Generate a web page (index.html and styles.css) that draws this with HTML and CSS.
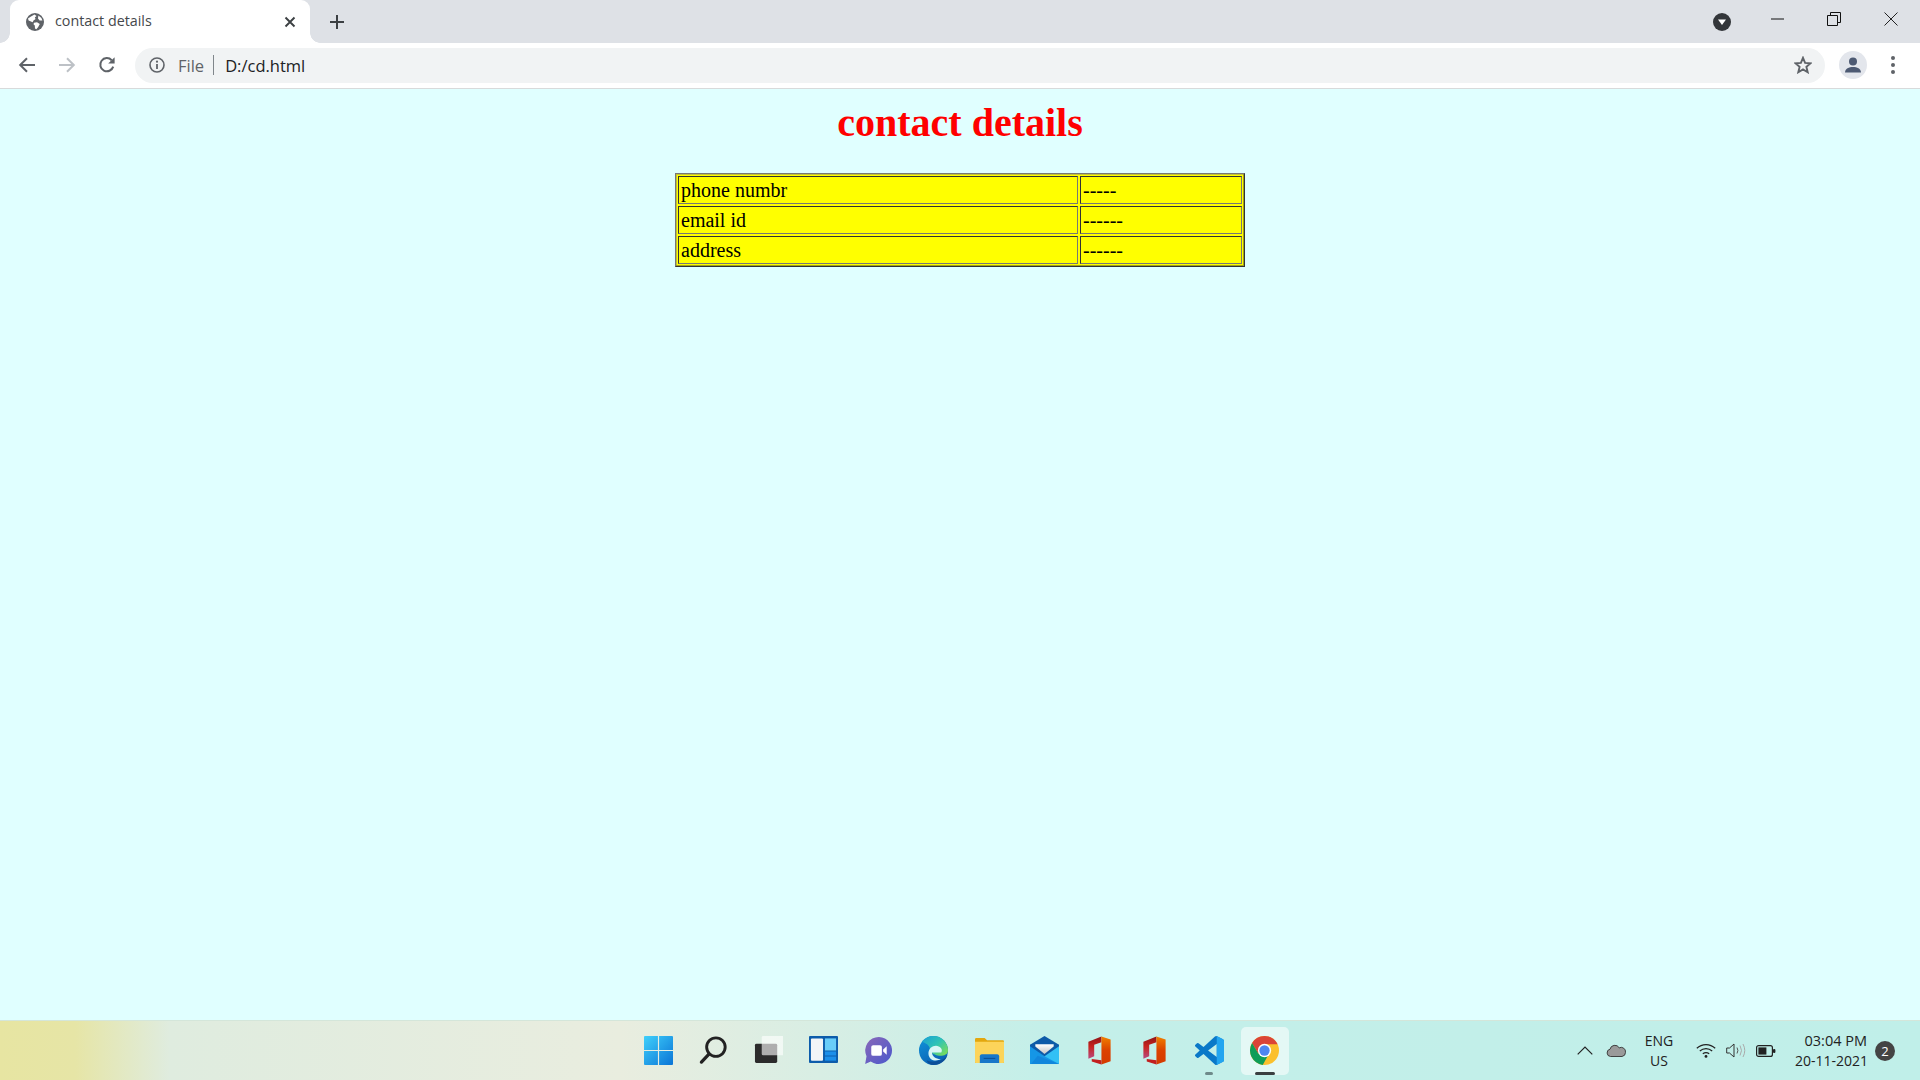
FILE: index.html
```html
<!DOCTYPE html>
<html lang="en">
<head>
<meta charset="utf-8">
<title>contact details</title>
<link rel="stylesheet" href="styles.css">
</head>
<body>
<div class="tabstrip">
  <div class="tab">
    <svg class="globe" viewBox="0 0 18 18"><circle cx="9" cy="9" r="9" fill="#5f6368"/><path d="M2 5.5 5 3.6 8.5 1.6 10.5 3 8.8 4.6 9.6 6 7.5 7.4 6.6 9.2 4.4 8.2 2.6 7.5Z M8 9.7 11 9.3 13.8 11 12.2 14 10.4 16.2 9 15.4 8.8 12.6 7.5 11.2Z M12.4 2.6 15.4 5 16.4 7.6 13.6 7.6 12 5.4Z" fill="#fff"/></svg>
    <span class="tab-title">contact details</span>
    <svg class="tab-close" viewBox="0 0 12 12"><path d="M1.5 1.5 10.5 10.5M10.5 1.5 1.5 10.5" stroke="#3c4043" stroke-width="1.9" fill="none"/></svg>
  </div>
  <svg class="newtab" viewBox="0 0 14 14"><path d="M7 0V14M0 7H14" stroke="#3c4043" stroke-width="2" fill="none"/></svg>
  <div class="strip-space"></div>
  <svg class="tabsearch" viewBox="0 0 18 18"><circle cx="9" cy="9" r="9" fill="#33363a"/><path d="M5 6.6H13L9 12Z" fill="#fff"/></svg>
  <svg class="winbtn" viewBox="0 0 14 14"><path d="M0 7H13" stroke="#111" stroke-width="1" fill="none"/></svg>
  <svg class="winbtn" viewBox="0 0 14 14"><path d="M.5 3.5H10.5V13.5H.5ZM3.5 3V.5H13.5V10.5H11" stroke="#111" stroke-width="1" fill="none"/></svg>
  <svg class="winbtn" viewBox="0 0 14 14"><path d="M.5.5 13.5 13.5M13.5.5.5 13.5" stroke="#222" stroke-width="1" fill="none"/></svg>
</div>

<div class="toolbar">
  <svg class="navicon" viewBox="0 0 18 18"><path d="M17 9H2.5M9 2.2 2.2 9 9 15.8" stroke="#5f6368" stroke-width="2" fill="none"/></svg>
  <svg class="navicon" viewBox="0 0 18 18"><path d="M1 9H15.5M9 2.2 15.8 9 9 15.8" stroke="#bdc1c6" stroke-width="2" fill="none"/></svg>
  <svg class="navicon" viewBox="0 0 18 18"><path d="M15.2 10.6A6.6 6.6 0 1 1 13.7 4.2" stroke="#5f6368" stroke-width="2" fill="none"/><path d="M16.6 1.2V7.6H10.2Z" fill="#5f6368"/></svg>
  <div class="omnibox">
    <svg class="info" viewBox="0 0 16 16"><circle cx="8" cy="8" r="7" stroke="#5f6368" stroke-width="1.6" fill="none"/><path d="M8 7V12" stroke="#5f6368" stroke-width="1.8"/><circle cx="8" cy="4.7" r="1.1" fill="#5f6368"/></svg>
    <span class="scheme">File</span>
    <span class="sep"></span>
    <span class="url">D:/cd.html</span>
    <svg class="star" viewBox="0 0 18 18"><path d="M9 1.8 11.1 6.9 16.6 7.3 12.4 10.9 13.7 16.2 9 13.4 4.3 16.2 5.6 10.9 1.4 7.3 6.9 6.9Z" stroke="#5f6368" stroke-width="1.9" fill="none"/></svg>
  </div>
  <div class="avatar">
    <svg viewBox="0 0 18 18"><circle cx="9" cy="5.4" r="4" fill="#4d5a73"/><path d="M1 16.5C1 12.6 5 11 9 11S17 12.6 17 16.5Z" fill="#4d5a73"/></svg>
  </div>
  <div class="dots"><i></i><i></i><i></i></div>
</div>

<main class="page">
  <h1 class="heading">contact details</h1>
  <table class="contact">
    <tr><td class="label">phone numbr</td><td>-----</td></tr>
    <tr><td class="label">email id</td><td>------</td></tr>
    <tr><td class="label">address</td><td>------</td></tr>
  </table>
</main>

<footer class="taskbar">
  <div class="tb-left"></div>
  <div class="apps">
    <div class="app"><svg viewBox="0 0 30 30"><defs><linearGradient id="w" x1="0" y1="0" x2="1" y2="1"><stop offset="0" stop-color="#3fd0fb"/><stop offset="1" stop-color="#0a74d6"/></linearGradient></defs><path d="M1 0H14.4V14.4H0V1A1 1 0 0 1 1 0ZM15.6 0H29A1 1 0 0 1 30 1V14.4H15.6ZM0 15.6H14.4V30H1A1 1 0 0 1 0 29ZM15.6 15.6H30V29A1 1 0 0 1 29 30H15.6Z" fill="url(#w)"/></svg></div>
    <div class="app"><svg viewBox="0 0 30 30"><circle cx="17.5" cy="11.5" r="9.6" stroke="#222" stroke-width="3" fill="none"/><path d="M10.5 18.5 2.5 27" stroke="#222" stroke-width="3.4" stroke-linecap="round"/></svg></div>
    <div class="app"><svg viewBox="0 0 30 30"><rect x="1" y="8" width="23" height="20" rx="1.5" fill="#2b2b2b"/><rect x="8" y="0" width="23" height="20" rx="1.5" fill="#fff" fill-opacity=".62"/></svg></div>
    <div class="app"><svg viewBox="0 0 30 30"><rect x="0" y="0" width="30" height="28" rx="1" fill="#0d5cab"/><rect x="2" y="2.5" width="12.5" height="23" rx="1" fill="#f3f5f7"/><rect x="16.5" y="2.5" width="11.5" height="12.5" fill="#69cdf9"/><rect x="16.5" y="16" width="11.5" height="4.2" fill="#1b8fea"/><rect x="16.5" y="21.2" width="11.5" height="4.3" fill="#1b8fea"/></svg></div>
    <div class="app"><svg viewBox="0 0 30 30"><defs><linearGradient id="c" x1="0" y1="0" x2="1" y2="1"><stop offset="0" stop-color="#8a68b8"/><stop offset="1" stop-color="#4a58cc"/></linearGradient></defs><path d="M15.5 1A14 14 0 1 1 7 26.5L1.2 29 2.6 21A14 14 0 0 1 15.5 1Z" fill="url(#c)"/><rect x="7.5" y="9.5" width="11" height="11" rx="2" fill="#fff"/><path d="M19.8 14 23.5 10.5V19.5L19.8 16Z" fill="#fff"/></svg></div>
    <div class="app"><svg viewBox="0 0 30 30"><defs><linearGradient id="e0" x1="0" y1="0" x2=".5" y2="1"><stop offset="0" stop-color="#0f96dc"/><stop offset="1" stop-color="#0b62b4"/></linearGradient><linearGradient id="e1" x1="0" y1="0" x2="1" y2=".8"><stop offset="0" stop-color="#1a9fd6"/><stop offset=".55" stop-color="#2fc4b4"/><stop offset="1" stop-color="#78dc5c"/></linearGradient></defs><circle cx="15" cy="15" r="15" fill="url(#e0)"/><path d="M15 0A15 15 0 0 1 30 15C30 19 26 20.5 22 20.5 19 20.5 14 19 11 15 12 11 9 8 3 6A15 15 0 0 1 15 0Z" fill="url(#e1)"/><path d="M29.6 19C28 26 22 30 15 30 11.5 30 8.8 28 7.8 25 11 27 18 27 24 24.6 27 23.2 28.8 21.2 29.6 19Z" fill="#0c4f99"/><path d="M9.8 18.5C9.5 12 16 8.8 20.4 10.8 23.6 12.2 24.4 15.2 23 17H13.4C13.8 21 17 23.6 22.4 23.8 17.5 27 10.2 25 9.8 18.5Z" fill="#d8f6f5"/></svg></div>
    <div class="app"><svg viewBox="0 0 30 30"><path d="M0 3.5C0 2.5.8 2 1.5 2H10L12.5 4.5H28.5C29.4 4.5 30 5 30 6V27C30 27.7 29.4 28 28.5 28H1.5C.6 28 0 27.7 0 27Z" fill="#e3a70e"/><path d="M0 6H30V27C30 27.7 29.4 28 28.5 28H1.5C.6 28 0 27.7 0 27Z" fill="#fcd45a"/><path d="M5 21C5 20 6 19 7 19H23C24 19 25 20 25 21V28H5Z" fill="#1877c9"/><rect x="9" y="22.6" width="12" height="1.1" fill="#0d4f94"/></svg></div>
    <div class="app"><svg viewBox="0 0 30 30"><defs><linearGradient id="m" x1="0" y1="0" x2="0" y2="1"><stop offset="0" stop-color="#fff"/><stop offset="1" stop-color="#c4c6c8"/></linearGradient></defs><path d="M0 9H30V29H0Z" fill="#33c0f5"/><path d="M0 9 15 21 30 29H0Z" fill="#1596e6"/><path d="M8 20.5 30 29H1Z" fill="#0f7cd6" fill-opacity=".6"/><path d="M0 9 15 0 30 9V10.5L15 21 0 10.5Z" fill="#0d5aa8"/><path d="M5.5 8.5H24.5V10.8L15 18.5 5.5 10.8Z" fill="url(#m)"/></svg></div>
    <div class="app"><svg viewBox="0 0 24 30"><defs><linearGradient id="o1" x1="0" y1="0" x2="0" y2="1"><stop offset="0" stop-color="#8e1418"/><stop offset=".45" stop-color="#c8231e"/><stop offset="1" stop-color="#b84a80"/></linearGradient><linearGradient id="o3" x1="0" y1="0" x2="0" y2="1"><stop offset="0" stop-color="#f08000"/><stop offset=".5" stop-color="#dc4200"/><stop offset="1" stop-color="#d43a00"/></linearGradient></defs><path d="M14 .5 .5 6V23.5L6.5 21V9L14 6.5Z" fill="url(#o1)"/><path d="M14 .5 23.5 3.5V26L14 29.5Z" fill="url(#o3)"/><path d="M4 23.8 14 25.2V29.5L4 26.5Z" fill="#c21f1f"/></svg></div>
    <div class="app"><svg viewBox="0 0 24 30"><path d="M14 .5 .5 6V23.5L6.5 21V9L14 6.5Z" fill="url(#o1)"/><path d="M14 .5 23.5 3.5V26L14 29.5Z" fill="url(#o3)"/><path d="M4 23.8 14 25.2V29.5L4 26.5Z" fill="#c21f1f"/></svg></div>
    <div class="app app-running"><svg viewBox="0 0 24 24"><path fill="#0a78c8" d="M23.15 2.587L18.21.21a1.494 1.494 0 0 0-1.705.29l-9.46 8.63-4.12-3.128a.999.999 0 0 0-1.276.057L.327 7.261A1 1 0 0 0 .326 8.74L3.899 12 .326 15.26a1 1 0 0 0 .001 1.479L1.65 17.94a.999.999 0 0 0 1.276.057l4.12-3.128 9.46 8.63a1.492 1.492 0 0 0 1.704.29l4.942-2.377A1.5 1.5 0 0 0 24 20.06V3.939a1.5 1.5 0 0 0-.85-1.352zm-5.146 14.861L10.826 12l7.178-5.448v10.896z"/><path fill="#22a5f0" d="M18 0.1 23.15 2.587A1.5 1.5 0 0 1 24 3.939V20.06A1.5 1.5 0 0 1 23.15 21.413L18 23.9Z"/></svg></div>
    <div class="app app-active"><svg viewBox="0 0 28 28"><circle cx="14" cy="14" r="14" fill="#fbc02d"/><path d="M14 0A14 14 0 0 0 2 6.8L8 17 14 8H26.7A14 14 0 0 0 14 0Z" fill="#db4437"/><path d="M2 6.8A14 14 0 0 0 12.3 27.9L18 17.5 8 17Z" fill="#0f9d58"/><circle cx="14" cy="14" r="6.4" fill="#fff"/><circle cx="14" cy="14" r="5" fill="#4e86f0"/></svg></div>
  </div>
  <div class="tray">
    <svg class="t-chev" viewBox="0 0 16 9"><path d="M.7 8.3 8 1 15.3 8.3" stroke="#222" stroke-width="1.2" fill="none"/></svg>
    <svg class="t-cloud" viewBox="0 0 20 13"><path d="M4.5 12.5A3.7 3.7 0 0 1 4 5.2 5 5 0 0 1 13.2 3.8 4.4 4.4 0 0 1 19.5 8.3 4.2 4.2 0 0 1 16 12.5Z" fill="#9a9a9a" stroke="#333" stroke-width=".9"/></svg>
    <div class="t-lang"><span>ENG</span><span>US</span></div>
    <svg class="t-wifi" viewBox="0 0 20 15"><path d="M.8 5.2C6 .3 14 .3 19.2 5.2M3.8 8C7.5 4.8 12.5 4.8 16.2 8M6.8 10.8C8.8 9.4 11.2 9.4 13.2 10.8" stroke="#222" stroke-width="1.2" fill="none"/><circle cx="10" cy="13.4" r="1.4" fill="#222"/></svg>
    <svg class="t-vol" viewBox="0 0 20 15"><path d="M.7 5H3.5L8 1V14L3.5 10H.7Z" stroke="#333" stroke-width="1" fill="none"/><path d="M11 4.5Q12.8 7.5 11 10.5" stroke="#555" fill="none"/><path d="M14 2.5Q17 7.5 14 12.5M17 1Q20.5 7.5 17 14" stroke="#aaa" fill="none"/></svg>
    <svg class="t-bat" viewBox="0 0 20 12"><rect x=".6" y=".6" width="15.8" height="10.8" rx="2" stroke="#222" stroke-width="1.2" fill="none"/><rect x="2.4" y="2.4" width="8" height="7.2" fill="#222"/><rect x="17" y="4" width="2.4" height="4" rx="1" fill="#222"/></svg>
    <div class="t-clock"><span class="t-time">03:04 PM</span><span>20-11-2021</span></div>
    <div class="t-notif">2</div>
  </div>
</footer>
</body>
</html>
```
FILE: styles.css
```css
* { box-sizing: border-box; }
html, body { margin: 0; height: 100%; }
body {
  display: flex;
  flex-direction: column;
  height: 1080px;
  overflow: hidden;
  background: #e0ffff;
  font-family: "Open Sans", "Noto Sans", sans-serif;
}

/* tab strip */
.tabstrip {
  display: flex;
  align-items: center;
  height: 43px;
  flex: none;
  padding-left: 10px;
  background: #dee1e6;
}
.tab {
  position: relative;
  display: flex;
  align-items: center;
  align-self: stretch;
  width: 300px;
  padding: 0 14px 0 16px;
  background: #fff;
  border-radius: 9px 9px 0 0;
}
.tab::before, .tab::after {
  content: "";
  position: absolute;
  bottom: 0;
  width: 10px;
  height: 10px;
}
.tab::before { left: -10px; background: radial-gradient(circle at 0 0, #dee1e6 9.5px, #fff 10px); }
.tab::after { right: -10px; background: radial-gradient(circle at 100% 0, #dee1e6 9.5px, #fff 10px); }
.globe { width: 18px; height: 18px; flex: none; }
.tab-title {
  flex: 1;
  margin: 0 0 2px 11px;
  font-size: 14.3px;
  color: #45484c;
}
.tab-close { width: 12px; height: 12px; flex: none; }
.newtab { width: 14px; height: 14px; flex: none; margin-left: 20px; }
.strip-space { flex: 1; }
.tabsearch { width: 18px; height: 18px; flex: none; margin-right: 40px; }
.winbtn { width: 14px; height: 14px; flex: none; margin-bottom: 5px; margin-right: 42px; }
.winbtn:nth-last-child(2) { margin-right: 43px; }
.winbtn:last-child { margin-right: 22px; }

/* toolbar */
.toolbar {
  display: flex;
  align-items: center;
  height: 46px;
  flex: none;
  padding: 0 0 1px 18px;
  background: #fff;
  border-bottom: 1px solid #d8dadb;
}
.navicon { width: 18px; height: 18px; flex: none; margin-right: 22px; }
.omnibox {
  display: flex;
  align-items: center;
  width: 1690px;
  height: 35px;
  margin-left: -3px;
  padding: 0 10px 0 14px;
  background: #f1f3f4;
  border-radius: 18px;
}
.info { width: 16px; height: 16px; flex: none; }
.scheme { margin-left: 13px; font-size: 16.5px; color: #5f6368; }
.sep { width: 1px; height: 20px; margin: 0 11px 0 9px; background: #80868b; }
.url { flex: 1; font-size: 16.5px; color: #202124; }
.star { width: 18px; height: 18px; flex: none; margin-right: 3px; }
.avatar {
  display: flex;
  align-items: center;
  justify-content: center;
  width: 28px;
  height: 28px;
  margin-left: 14px;
  border-radius: 50%;
  background: #e3e6ec;
}
.avatar svg { width: 18px; height: 18px; }
.dots {
  display: flex;
  flex-direction: column;
  gap: 3px;
  margin-left: 24px;
}
.dots i { width: 4px; height: 4px; border-radius: 50%; background: #5f6368; }

/* page */
.page { flex: 1; min-height: 0; background: #e0ffff; overflow: hidden; }
.heading {
  margin: 11px 0 27px;
  text-align: center;
  font: bold 40px/46px "Liberation Serif", serif;
  color: #f00;
}
.contact {
  width: 570px;
  margin: 0 auto;
  border-collapse: separate;
  border-spacing: 2px;
  background: #ff0;
  border: 1px solid;
  border-color: #777 #333 #333 #777;
  box-shadow: inset 1px 1px 0 rgba(119, 119, 119, .45), inset -1px -1px 0 rgba(51, 51, 51, .45);
  font: 20px/24px "Liberation Serif", serif;
  color: #000;
}
.contact td {
  padding: 1px 1px 1px 2px;
  border: 1px solid;
  border-color: #333 #777 #777 #333;
}
.contact .label { width: 400px; }

/* taskbar */
.taskbar {
  display: grid;
  grid-template-columns: 1fr auto 1fr;
  align-items: center;
  height: 60px;
  flex: none;
  border-top: 1px solid #d4e6da;
  background: linear-gradient(90deg, #e7e5a2 0, #e6e5a6 75px, #dfecdf 170px, #e9eddf 620px, #d8eee4 820px, #c4efe9 1040px, #c0efe9 1920px);
}
.apps { display: flex; margin-left: 3px; }
.app {
  position: relative;
  display: flex;
  align-items: center;
  justify-content: center;
  width: 55.1px;
  height: 48px;
}
.app svg { height: 29px; width: 29px; }
.app-running::after, .app-active::after {
  content: "";
  position: absolute;
  bottom: 0;
  left: 50%;
  height: 3px;
  border-radius: 2px;
  transform: translateX(-50%);
}
.app-running::after { width: 8px; background: #6e8a8a; }
.app-active::after { width: 20px; background: #3a3f40; }
.app-active::before {
  content: "";
  position: absolute;
  left: 4px;
  right: 3px;
  top: 0;
  bottom: 0;
  border-radius: 5px;
  background: #fff;
  opacity: .55;
}
.app-active svg { position: relative; }

.tray {
  display: flex;
  align-items: center;
  justify-content: flex-end;
  padding-right: 25px;
  color: #222;
  font-family: "Open Sans", sans-serif;
  font-size: 14px;
  line-height: 20px;
}
.t-chev { width: 16px; height: 9px; margin-right: 13px; }
.t-cloud { width: 20px; height: 13px; margin-right: 18px; }
.t-lang { display: flex; flex-direction: column; align-items: center; width: 30px; margin-right: 22px; }
.t-wifi { width: 20px; height: 15px; margin-right: 10px; }
.t-vol { width: 20px; height: 15px; margin-right: 10px; }
.t-bat { width: 20px; height: 12px; margin-right: 19px; }
.t-clock { display: flex; flex-direction: column; align-items: flex-end; }
.t-time { font-size: 14.5px; margin-right: 1px; }
.t-notif {
  display: flex;
  align-items: center;
  justify-content: center;
  width: 20px;
  height: 20px;
  margin-left: 7px;
  border-radius: 50%;
  background: #444;
  color: #fff;
  font-size: 13px;
}
```
